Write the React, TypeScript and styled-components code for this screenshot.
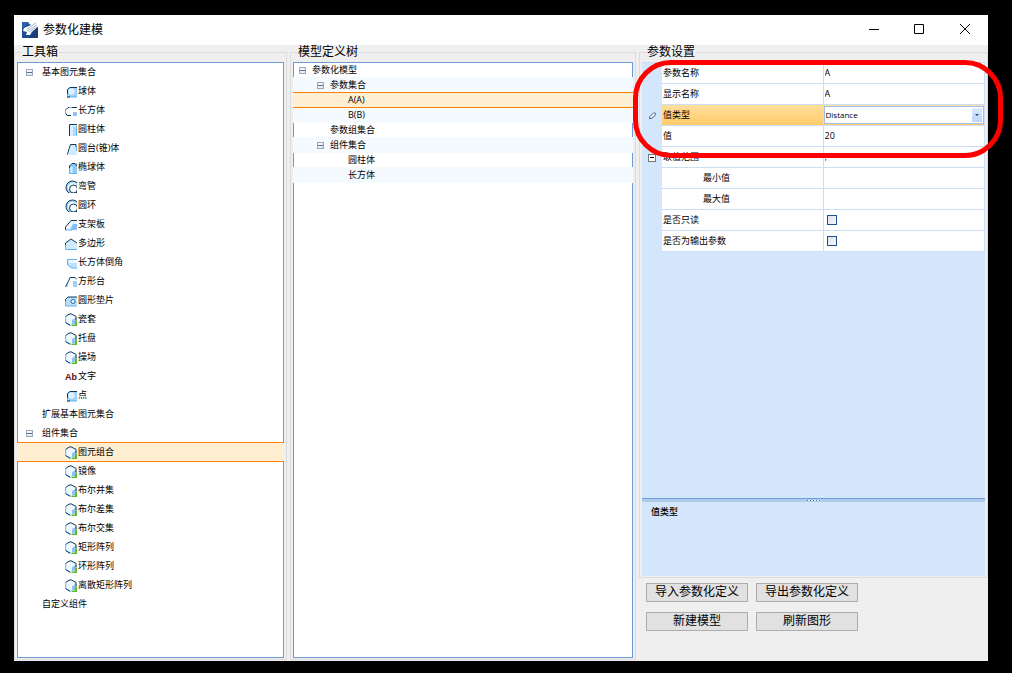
import React from "react";
import styled, { createGlobalStyle, css } from "styled-components";

const GlobalStyle = createGlobalStyle`
  * { box-sizing: border-box; }
  body {
    margin: 0;
    background: #000;
    color: #000;
    font-family: "Open Sans", "Noto Sans CJK SC", sans-serif;
    font-size: 9px;
  }
  ul { list-style: none; margin: 0; padding: 0; }
  button, input, select { font-family: inherit; color: inherit; padding: 0; margin: 0; }
`;

const Page = styled.div`
  display: flex;
  min-height: 100vh;
  padding: 15px 24px 12px 14px;
`;

const Window = styled.main`
  flex: 1;
  min-width: 0;
  display: flex;
  flex-direction: column;
  background: #efefef;
`;

const TitleBar = styled.header`
  display: flex;
  align-items: center;
  height: 30px;
  padding-left: 8px;
  background: #fff;
`;

const Title = styled.h1`
  flex: 1;
  margin: 0 0 0 5px;
  font-size: 12px;
  line-height: 16px;
  font-weight: 400;
`;

const CaptionButton = styled.button`
  display: grid;
  place-items: center;
  width: 46px;
  height: 28px;
  border: 0;
  background: transparent;
`;

const Columns = styled.div`
  flex: 1;
  display: grid;
  grid-template-columns: 273fr 346fr 349fr;
  gap: 3px;
  padding-bottom: 1px;
`;

const SideColumn = styled.div`
  position: relative;
  display: flex;
  flex-direction: column;
  min-width: 0;
`;

const Group = styled.fieldset`
  flex: 1;
  display: flex;
  flex-direction: column;
  min-width: 0;
  margin: 0;
  padding: 3px 2px 1px;
  border: 1px solid #dcdcdc;
`;

const GroupTitle = styled.legend`
  margin-left: 4px;
  padding: 0 1px;
  font-size: 12px;
  line-height: 14px;
`;

const Tree = styled.ul`
  flex: 1;
  border: 1px solid #6f9bd3;
  background: #fff;
`;

const Row = styled.li<{ $height: number; $indent: number; $selected?: boolean; $tinted?: boolean }>`
  display: flex;
  align-items: center;
  height: ${(p) => p.$height}px;
  padding: 0 0 1px ${(p) => p.$indent}px;
  line-height: 14px;
  white-space: nowrap;
  ${(p) =>
    (p.$selected || p.$tinted) &&
    css`
      height: ${p.$height + 1}px;
      margin: -1px -1px 0;
      padding: 0 0 0 ${p.$indent + 1}px;
      background: #f5faff;
    `}
  ${(p) =>
    p.$selected &&
    css`
      position: relative;
      z-index: 1;
      border: solid #fb7f08;
      border-width: 1px 0;
      background: #ffefd2;
    `}
`;

const Expander = styled.button<{ $gap: number }>`
  display: grid;
  place-items: center;
  flex: none;
  width: 7px;
  height: 7px;
  margin-right: ${(p) => p.$gap}px;
  border: 1px solid #9aa7bb;
  background: linear-gradient(135deg, #fff, #dde4ee);
  &::after {
    content: "";
    width: 5px;
    height: 1px;
    background: #5b6f92;
  }
`;

const RowIcon = styled.svg`
  flex: none;
  width: 12px;
  height: 13px;
  margin-right: 1px;
`;

const PropertyGrid = styled.div`
  flex: 1;
  display: flex;
  flex-direction: column;
  background: #d4e6fc;
`;

const PropertyTable = styled.table`
  width: 100%;
  table-layout: fixed;
  border-spacing: 0;
  border-top: 1px solid #cbdef6;
`;

const PropertyRow = styled.tr<{ $selected?: boolean }>`
  height: 21px;
  background: #fff;
  ${(p) => p.$selected && css`background: linear-gradient(#ffdf9e, #ffca66);`}
`;

const Gutter = styled.td`
  width: 20px;
  padding: 0 0 0 6px;
  background: #d4e6fc;
  line-height: 0;
`;

const NameCell = styled.th<{ $child?: boolean }>`
  padding: 0 0 0 ${(p) => (p.$child ? 41 : 1)}px;
  border: solid #cbdef6;
  border-width: 0 1px 1px 0;
  font-weight: 400;
  line-height: 14px;
  text-align: left;
`;

const ValueCell = styled.td`
  padding: 0;
  border: solid #cbdef6;
  border-width: 0 1px 1px 0;
  line-height: 0;
`;

const ValueInput = styled.input`
  display: block;
  width: 100%;
  height: 18px;
  padding: 0 0 1px 1px;
  border: 0;
  outline: 0;
  background: transparent;
  font-size: 9px;
`;

const SelectBox = styled.div`
  position: relative;
  height: 18px;
  border: 1px solid #a3bfe6;
  background: #fff;
`;

const TypeSelect = styled.select`
  appearance: none;
  display: block;
  width: 100%;
  height: 16px;
  padding: 0 0 2px 1px;
  border: 0;
  outline: 0;
  background: transparent;
  font-size: 8px;
`;

const DropArrow = styled.span`
  position: absolute;
  top: 1px;
  right: 1px;
  bottom: 1px;
  display: grid;
  place-items: center;
  width: 10px;
  background: linear-gradient(#dbe9fc, #bcd5f8);
  pointer-events: none;
`;

const CheckBox = styled.input`
  appearance: none;
  display: block;
  width: 10px;
  height: 10px;
  margin-left: 3px;
  border: 1px solid #1f4e8c;
  background: linear-gradient(135deg, #dce1ea, #f6f7fa);
`;

const GridExpander = styled.button`
  display: grid;
  place-items: center;
  width: 8px;
  height: 8px;
  border: 1px solid #777;
  background: #fff;
  &::after {
    content: "";
    width: 4px;
    height: 1px;
    background: #000;
  }
`;

const Splitter = styled.div`
  display: flex;
  justify-content: center;
  height: 4px;
  margin-top: auto;
  border-top: 1px solid #6f9fdc;
  background: #b0caea;
`;

const Grip = styled.span`
  width: 14px;
  height: 1px;
  margin-top: 1px;
  background: repeating-linear-gradient(90deg, #2a6fd0 0 1px, #e8f2ff 1px 3px);
`;

const Description = styled.p`
  height: 74px;
  margin: 0;
  padding: 3px 9px;
  font-weight: 500;
  line-height: 14px;
`;

const Actions = styled.div`
  display: grid;
  grid-template-columns: 102px 102px;
  gap: 10px 8px;
  padding: 5px 7px 29px;
`;

const ActionButton = styled.button`
  height: 19px;
  padding-bottom: 2px;
  border: 1px solid #adadad;
  background: #e1e1e1;
  font-size: 12px;
  line-height: 15px;
`;

const Highlight = styled.div`
  position: absolute;
  z-index: 2;
  top: 15px;
  left: -6px;
  right: -15px;
  height: 98px;
  border: 5px solid #f00;
  border-radius: 38px;
  pointer-events: none;
`;

const NAVY = "#0b3a5e";
const SKY = "#62b5f2";
const PALE = "#cfeafd";

const cube = (
  <>
    <path d="M6 .8 11.2 3.4V10L6 12.3.7 9.6V3.4z" fill="#f1f9ff" />
    <path d="M7 7 11.5 4.5V11H7z" fill="#8fc5f5" />
    <path d="M6.500 13V11.500H10V7.500h2V13z" fill="#5fbb2d" />
    <path d="M6 12.3.7 9.6V3.4" fill="none" stroke={SKY} />
    <path d="M.7 3.4 4 1.2 6 .8 11 3.4V7M.7 9.6 5 12.3" fill="none" stroke={NAVY} />
  </>
);

const icons: Record<string, React.ReactNode> = {
  sphere: (
    <>
      <path d="M2.5 4.5 5 2.5h7v9.5H2.5z" fill="#9fcffb" />
      <circle cx="6.5" cy="6.500" r="3.2" fill="#dff0fe" />
      <path d="M12 2.5H5L2.5 4.5V10" fill="none" stroke={NAVY} />
      <path d="M2.5 9v3H12" fill="none" stroke={SKY} />
      <path d="M2 12h3" stroke={NAVY} />
    </>
  ),
  box: (
    <>
      <path d="M8 8h4v4H8z" fill="#8fc5fb" />
      <path d="M2 11.500.5 9V6L3 3.500h9M2 11.500h4" fill="none" stroke={NAVY} />
      <path d="M.5 5.500v4M4 3.500h3" stroke={SKY} />
    </>
  ),
  cylinder: (
    <>
      <path d="M5 2h7v11H5z" fill="#d9efff" />
      <path d="M8 4h4v9H8z" fill="#b2dafb" />
      <path d="M4.5 13V1.5H12" fill="none" stroke={NAVY} />
      <path d="M11.5 3v9" stroke={SKY} />
    </>
  ),
  cone: (
    <>
      <path d="M6 3h5l1 10H4z" fill={PALE} />
      <path d="M2.500 12.500 4 7l1.500-4.500H11V5" fill="none" stroke={NAVY} />
      <path d="M11.500 5v4" stroke={SKY} />
    </>
  ),
  ellipsoid: (
    <>
      <path d="M4.5 12.5V5L7 2.5h5v10z" fill="#8cc8f9" />
      <path d="M5.5 6h2v6h-2z" fill="#dff2ff" />
      <path d="M4.5 12V5L7 2.5h3L12 5" fill="none" stroke={NAVY} />
      <path d="M4.5 7v5.5H12" fill="none" stroke={SKY} />
    </>
  ),
  ring: (
    <>
      <circle cx="7.500" cy="7.500" r="5.500" fill="none" stroke="#a9dafb" strokeWidth="2" />
      <circle cx="7.500" cy="7.500" r="6.500" fill="none" stroke={NAVY} />
      <circle cx="8.500" cy="9" r="4" fill="#fff" stroke={NAVY} />
    </>
  ),
  bracket: (
    <>
      <path d="M1 12 6 2.5h6V12z" fill="#e6f4ff" />
      <path d="M5 12l3-6h4v6z" fill="#83bdf8" />
      <path d="M.5 12V9L6 2.5h6" fill="none" stroke={NAVY} />
      <path d="M.5 12H7" stroke={SKY} />
    </>
  ),
  polygon: (
    <>
      <path d="M.5 6 6 2l6 4v6.5H.5z" fill={PALE} />
      <path d="M.5 12V6L6 2l6 4" fill="none" stroke={NAVY} />
      <path d="M.5 8v4.5H12" fill="none" stroke={SKY} />
    </>
  ),
  chamfer: (
    <>
      <path d="M2.5 3H12v9.5H7L2.5 9z" fill="#bfe2fc" />
      <path d="M4 4h8v3H4z" fill="#edf7ff" />
      <path d="M12 3.5H2.5V9L7 12h5" fill="none" stroke={SKY} />
    </>
  ),
  frustum: (
    <>
      <path d="M8 6h4v6H8z" fill="#9fcffb" />
      <path d="M.5 12 2 9l2-4 1-2.5h5l2 2" fill="none" stroke={NAVY} />
      <path d="M1.5 12 3 9" stroke={SKY} />
    </>
  ),
  washer: (
    <>
      <path d="M.5 6 4 3h8v9H.5z" fill="#b9defb" />
      <path d="M.5 9V5.5L3 3h9" fill="none" stroke={NAVY} />
      <path d="M.5 7v5H12" fill="none" stroke={SKY} />
      <circle cx="8" cy="7.5" r="2" fill="#fff" stroke="#1b67ad" />
    </>
  ),
  cube,
};

const TextIcon = styled.span`
  flex: none;
  width: 13px;
  padding-top: 2px;
  color: #5a0d14;
  font-family: "Liberation Sans", sans-serif;
  font-size: 9px;
  font-weight: 700;
`;

function ItemIcon({ name }: { name: string }) {
  if (name === "text") {
    return <TextIcon aria-hidden="true">Ab</TextIcon>;
  }
  return (
    <RowIcon viewBox="0 0 12 13" aria-hidden="true">
      {icons[name]}
    </RowIcon>
  );
}

interface Item {
  label: string;
  level?: number;
  icon?: string;
  open?: boolean;
  selected?: boolean;
}

const toolbox: Item[] = [
  { label: "基本图元集合", open: true },
  { label: "球体", icon: "sphere" },
  { label: "长方体", icon: "box" },
  { label: "圆柱体", icon: "cylinder" },
  { label: "圆台(锥)体", icon: "cone" },
  { label: "椭球体", icon: "ellipsoid" },
  { label: "弯管", icon: "ring" },
  { label: "圆环", icon: "ring" },
  { label: "支架板", icon: "bracket" },
  { label: "多边形", icon: "polygon" },
  { label: "长方体倒角", icon: "chamfer" },
  { label: "方形台", icon: "frustum" },
  { label: "圆形垫片", icon: "washer" },
  { label: "瓷套", icon: "cube" },
  { label: "托盘", icon: "cube" },
  { label: "操场", icon: "cube" },
  { label: "文字", icon: "text" },
  { label: "点", icon: "sphere" },
  { label: "扩展基本图元集合" },
  { label: "组件集合", open: true },
  { label: "图元组合", icon: "cube", selected: true },
  { label: "镜像", icon: "cube" },
  { label: "布尔并集", icon: "cube" },
  { label: "布尔差集", icon: "cube" },
  { label: "布尔交集", icon: "cube" },
  { label: "矩形阵列", icon: "cube" },
  { label: "环形阵列", icon: "cube" },
  { label: "离散矩形阵列", icon: "cube" },
  { label: "自定义组件" },
];

const model: Item[] = [
  { label: "参数化模型", level: 0, open: true },
  { label: "参数集合", level: 1, open: true },
  { label: "A(A)", level: 2, selected: true },
  { label: "B(B)", level: 2 },
  { label: "参数组集合", level: 1 },
  { label: "组件集合", level: 1, open: true },
  { label: "圆柱体", level: 2 },
  { label: "长方体", level: 2 },
];

function Logo() {
  return (
    <svg width="16" height="16" viewBox="0 0 16 16" aria-hidden="true">
      <path d="M0 0h16v16H0z" fill="#1e4f96" />
      <path d="M5 0h11v5L10 10l-2 3H4l1-3-4-1 1-3 7-3z" fill="#fff" />
      <path d="M0 0h7L3 4 0 7z" fill="#2a62ab" />
      <path d="M5 7 14 1M5 9l10-6M7 10l8-5" stroke="#8c9dbf" strokeWidth=".8" />
      <path d="M10 10 16 5v11H5l4-3z" fill="#1b3d7c" />
    </svg>
  );
}

function Glyph({ d }: { d: string }) {
  return (
    <svg width="12" height="12" viewBox="0 0 12 12" aria-hidden="true">
      <path d={d} fill="none" stroke="#000" />
    </svg>
  );
}

export default function App() {
  return (
    <Page>
      <GlobalStyle />
      <Window>
        <TitleBar>
          <Logo />
          <Title>参数化建模</Title>
          <CaptionButton aria-label="最小化"><Glyph d="M2 5.5h10" /></CaptionButton>
          <CaptionButton aria-label="最大化"><Glyph d="M1.5 .5h9v9h-9z" /></CaptionButton>
          <CaptionButton aria-label="关闭"><Glyph d="M1 0l10 10M11 0 1 10" /></CaptionButton>
        </TitleBar>
        <Columns>
          <Group>
            <GroupTitle>工具箱</GroupTitle>
            <Tree>
              {toolbox.map((item) => (
                <Row
                  key={item.label}
                  $height={19}
                  $indent={item.icon ? 47 : item.open ? 8 : 24}
                  $selected={item.selected}
                >
                  {item.open && <Expander $gap={9} aria-label={`折叠${item.label}`} />}
                  {item.icon && <ItemIcon name={item.icon} />}
                  {item.label}
                </Row>
              ))}
            </Tree>
          </Group>
          <Group>
            <GroupTitle>模型定义树</GroupTitle>
            <Tree>
              {model.map((item, i) => (
                <Row
                  key={item.label}
                  $height={15}
                  $indent={(item.level ?? 0) * 18 + (item.open ? 5 : 18)}
                  $selected={item.selected}
                  $tinted={i % 2 === 1}
                >
                  {item.open && <Expander $gap={6} aria-label={`折叠${item.label}`} />}
                  {item.label}
                </Row>
              ))}
            </Tree>
          </Group>
          <SideColumn>
            <Group>
              <GroupTitle>参数设置</GroupTitle>
              <PropertyGrid>
                <PropertyTable>
                  <colgroup>
                    <col style={{ width: 20 }} />
                    <col />
                    <col />
                  </colgroup>
                  <tbody>
                    <PropertyRow>
                      <Gutter />
                      <NameCell scope="row"><label htmlFor="name">参数名称</label></NameCell>
                      <ValueCell><ValueInput id="name" defaultValue="A" /></ValueCell>
                    </PropertyRow>
                    <PropertyRow>
                      <Gutter />
                      <NameCell scope="row"><label htmlFor="display">显示名称</label></NameCell>
                      <ValueCell><ValueInput id="display" defaultValue="A" /></ValueCell>
                    </PropertyRow>
                    <PropertyRow $selected>
                      <Gutter>
                        <svg width="9" height="9" viewBox="0 0 9 9" aria-hidden="true">
                          <path d="M1.5 7.5 2 5.5 6 1.5 7.5 2.5 7 4.5 3.5 7.5z" fill="#fff" stroke="#3d5c8c" />
                        </svg>
                      </Gutter>
                      <NameCell scope="row"><label htmlFor="type">值类型</label></NameCell>
                      <ValueCell>
                        <SelectBox>
                          <TypeSelect id="type" defaultValue="Distance">
                            <option>Distance</option>
                          </TypeSelect>
                          <DropArrow>
                            <svg width="4" height="2" viewBox="0 0 4 2" aria-hidden="true">
                              <path d="M0 0h4L2 2z" fill="#1f3f77" />
                            </svg>
                          </DropArrow>
                        </SelectBox>
                      </ValueCell>
                    </PropertyRow>
                    <PropertyRow>
                      <Gutter />
                      <NameCell scope="row"><label htmlFor="value">值</label></NameCell>
                      <ValueCell><ValueInput id="value" defaultValue="20" /></ValueCell>
                    </PropertyRow>
                    <PropertyRow>
                      <Gutter><GridExpander aria-label="折叠取值范围" /></Gutter>
                      <NameCell scope="row"><label htmlFor="range">取值范围</label></NameCell>
                      <ValueCell><ValueInput id="range" defaultValue="," /></ValueCell>
                    </PropertyRow>
                    <PropertyRow>
                      <Gutter />
                      <NameCell scope="row" $child><label htmlFor="min">最小值</label></NameCell>
                      <ValueCell><ValueInput id="min" /></ValueCell>
                    </PropertyRow>
                    <PropertyRow>
                      <Gutter />
                      <NameCell scope="row" $child><label htmlFor="max">最大值</label></NameCell>
                      <ValueCell><ValueInput id="max" /></ValueCell>
                    </PropertyRow>
                    <PropertyRow>
                      <Gutter />
                      <NameCell scope="row"><label htmlFor="readonly">是否只读</label></NameCell>
                      <ValueCell><CheckBox type="checkbox" id="readonly" /></ValueCell>
                    </PropertyRow>
                    <PropertyRow>
                      <Gutter />
                      <NameCell scope="row"><label htmlFor="output">是否为输出参数</label></NameCell>
                      <ValueCell><CheckBox type="checkbox" id="output" /></ValueCell>
                    </PropertyRow>
                  </tbody>
                </PropertyTable>
                <Splitter><Grip /></Splitter>
                <Description>值类型</Description>
              </PropertyGrid>
            </Group>
            <Actions>
              <ActionButton>导入参数化定义</ActionButton>
              <ActionButton>导出参数化定义</ActionButton>
              <ActionButton>新建模型</ActionButton>
              <ActionButton>刷新图形</ActionButton>
            </Actions>
            <Highlight />
          </SideColumn>
        </Columns>
      </Window>
    </Page>
  );
}
